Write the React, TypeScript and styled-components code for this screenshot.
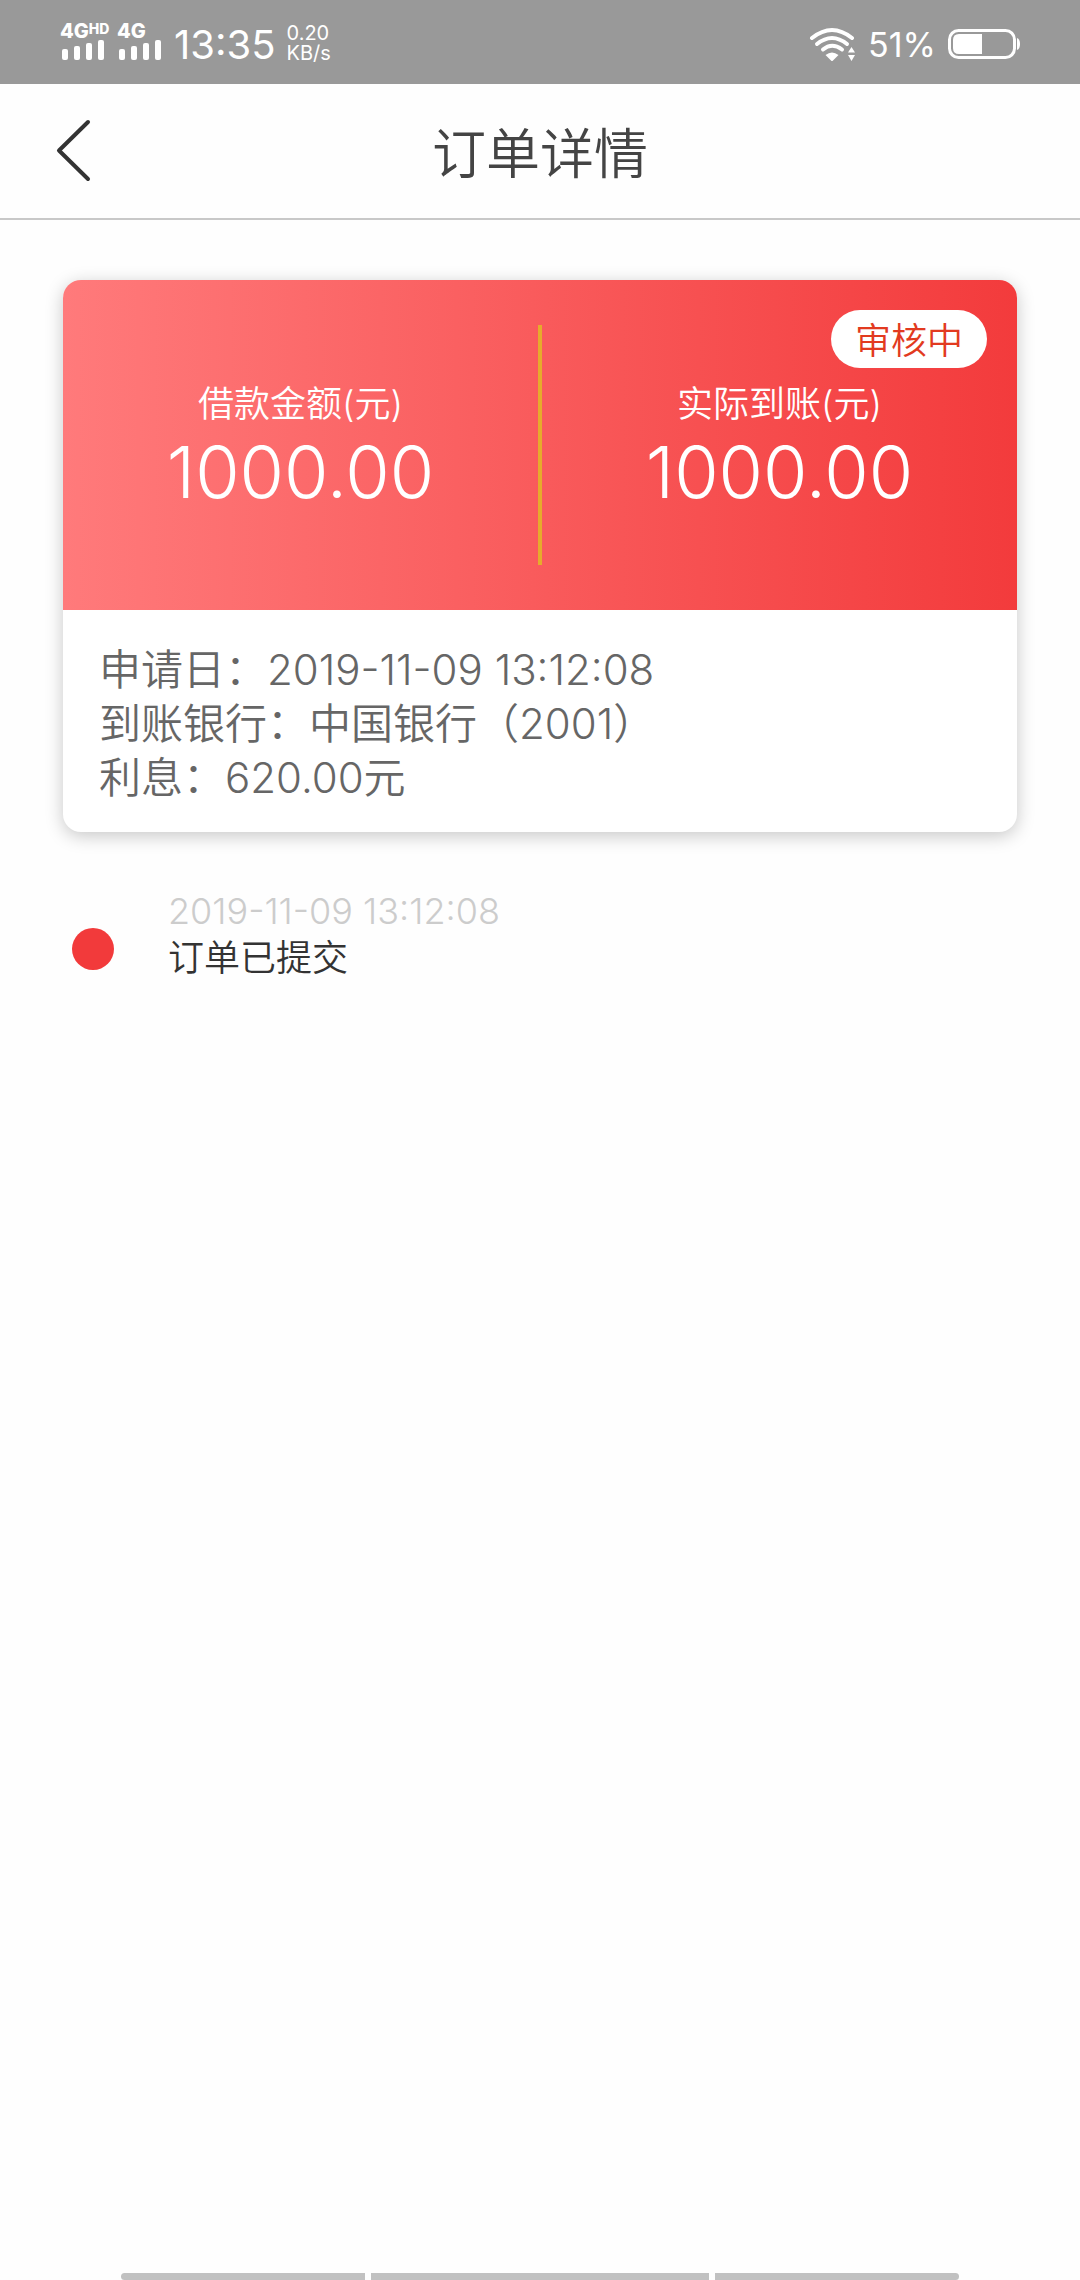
import React from "react";
import styled, { createGlobalStyle } from "styled-components";

const GlobalStyle = createGlobalStyle`
  *, *::before, *::after { box-sizing: border-box; }
  body {
    margin: 0;
    background: #fefefe;
    color: #333;
    font-family: Inter, "Noto Sans CJK SC", sans-serif;
    font-weight: 350;
  }
`;

const Screen = styled.div`
  display: flex;
  flex-direction: column;
  min-height: 100vh;
`;

const StatusBar = styled.div`
  display: flex;
  align-items: center;
  justify-content: space-between;
  height: 84px;
  padding: 6px 60px 0;
  background: #999;
  color: #fff;
`;

const StatusGroup = styled.div`
  display: flex;
  align-items: center;
  gap: 11px;
`;

const Signal = styled.div`
  display: flex;
  flex-direction: column;
  width: 46px;
  padding-bottom: 6px;
`;

const NetworkName = styled.span`
  display: flex;
  align-items: flex-start;
  height: 16px;
  font-size: 20px;
  font-weight: 800;
  line-height: 14px;
`;

const NetworkTag = styled.span`
  font-size: 14px;
  line-height: 10px;
`;

const Clock = styled.time`
  font-size: 40px;
  font-weight: 400;
  line-height: 48px;
`;

const Speed = styled.span`
  display: flex;
  flex-direction: column;
  font-size: 20px;
  font-weight: 400;
  line-height: 20px;
  padding-bottom: 4px;
`;

const BatteryLevel = styled.span`
  font-size: 34px;
  font-weight: 400;
  line-height: 48px;
`;

const Header = styled.header`
  display: grid;
  grid-template-columns: 150px 1fr 150px;
  align-items: center;
  height: 136px;
  border-bottom: 2px solid #c8c8c8;
`;

const BackButton = styled.button`
  display: flex;
  align-items: center;
  height: 134px;
  padding: 0 0 0 55px;
  border: 0;
  background: none;
  color: #333;
`;

const Title = styled.h1`
  margin: 0;
  padding-top: 8px;
  font-size: 54px;
  font-weight: 350;
  line-height: 72px;
  text-align: center;
  color: #444;
`;

const Content = styled.main`
  flex: 1;
  padding: 60px 63px;
`;

const Card = styled.section`
  overflow: hidden;
  border-radius: 18px;
  background: #fff;
  box-shadow: 0 4px 18px rgba(0, 0, 0, 0.22);
`;

const Amounts = styled.div`
  position: relative;
  display: grid;
  grid-template-columns: 1fr 4px 1fr;
  align-items: center;
  padding: 45px 0;
  background: linear-gradient(to right, #ff7a7b, #f33b3c);
  color: #fff;
`;

const Amount = styled.div`
  display: flex;
  flex-direction: column;
  align-items: center;
`;

const AmountLabel = styled.span`
  font-size: 36px;
  line-height: 54px;
`;

const AmountValue = styled.span`
  font-size: 72px;
  font-weight: 300;
  line-height: 82px;
`;

const Divider = styled.span`
  height: 240px;
  background: #e6ab2c;
`;

const Badge = styled.span`
  position: absolute;
  top: 30px;
  right: 30px;
  padding: 4px 24px 0;
  border-radius: 29px;
  background: #fff;
  color: #e23a20;
  font-size: 36px;
  line-height: 54px;
`;

const Details = styled.dl`
  margin: 0;
  padding: 33px 36px 27px;
  color: #666;
  font-size: 42px;
  line-height: 54px;
`;

const Detail = styled.div`
  display: flex;
`;

const Term = styled.dt`
  flex: none;
`;

const Value = styled.dd`
  margin: 0;
`;

const Timeline = styled.ol`
  margin: 0;
  padding: 57px 9px 0;
  list-style: none;
`;

const Event = styled.li`
  display: flex;
  align-items: flex-end;
  gap: 54px;
  font-size: 36px;
  line-height: 45px;
`;

const Dot = styled.span`
  width: 42px;
  height: 42px;
  margin-bottom: 11px;
  border-radius: 50%;
  background: #f23a3b;
`;

const EventText = styled.div`
  display: flex;
  flex-direction: column;
  gap: 2px;
`;

const EventTime = styled.time`
  color: #ccc;
`;

const GestureBar = styled.div`
  display: grid;
  grid-template-columns: 244fr 338fr 244fr;
  gap: 6px;
  height: 7px;
  padding: 0 121px;
`;

const GestureHandle = styled.span<{ $side?: "left" | "right" }>`
  background: #c1c1c1;
  border-radius: ${({ $side }) =>
    $side === "left" ? "4px 0 0 4px" : $side === "right" ? "0 4px 4px 0" : "0"};
`;

const SignalBars = () => (
  <svg width="46" height="20" viewBox="0 0 46 20" fill="currentColor" aria-hidden="true">
    <rect x="2" y="9" width="6" height="11" rx="2" />
    <rect x="14" y="6" width="6" height="14" rx="2" />
    <rect x="26" y="3" width="6" height="17" rx="2" />
    <rect x="38" y="0" width="6" height="20" rx="2" />
  </svg>
);

const WifiIcon = () => (
  <svg width="48" height="36" viewBox="0 0 48 36" fill="none" aria-hidden="true">
    <g stroke="#fff" strokeWidth="4" strokeLinecap="round">
      <path d="M3 11 Q23 -5 43 11" />
      <path d="M8 17 Q23 5 38 17" />
      <path d="M14 22.500 Q23 15 33 22.500" />
    </g>
    <path d="M16.500 28 Q23 23 29.500 28 L24 33.500 Q23 34.500 22 33.500 Z" fill="#fff" />
    <path d="M42.500 20 L46 25.500 H39 Z M39 28 H46 L42.500 34 Z" fill="#fff" />
  </svg>
);

const BatteryIcon = () => (
  <svg width="73" height="32" viewBox="0 0 73 32" fill="none" aria-hidden="true">
    <rect x="2.500" y="1.500" width="65" height="27" rx="9" stroke="#fff" strokeWidth="3" />
    <path d="M35 5 V25 H12 Q6 25 6 19 V11 Q6 5 12 5 Z" fill="#fff" />
    <path d="M70 9 Q73 10 73 15 Q73 20 70 21 Z" fill="#fff" />
  </svg>
);

const BackIcon = () => (
  <svg width="36" height="64" viewBox="0 0 36 64" fill="none" aria-hidden="true">
    <path
      d="M33 3 L4 31.500 L33 60"
      stroke="currentColor"
      strokeWidth="4"
      strokeLinecap="round"
      strokeLinejoin="round"
    />
  </svg>
);

const amounts = [
  { label: "借款金额(元)", value: "1000.00" },
  { label: "实际到账(元)", value: "1000.00" },
];

const details = [
  { term: "申请日：", value: "2019-11-09 13:12:08" },
  { term: "到账银行：", value: "中国银行（2001）" },
  { term: "利息：", value: "620.00元" },
];

const events = [{ time: "2019-11-09 13:12:08", text: "订单已提交" }];

const AmountCell = ({ label, value }: { label: string; value: string }) => (
  <Amount>
    <AmountLabel>{label}</AmountLabel>
    <AmountValue>{value}</AmountValue>
  </Amount>
);

export default function App() {
  return (
    <Screen>
      <GlobalStyle />
      <StatusBar>
        <StatusGroup>
          <Signal>
            <NetworkName>
              4G<NetworkTag>HD</NetworkTag>
            </NetworkName>
            <SignalBars />
          </Signal>
          <Signal>
            <NetworkName>4G</NetworkName>
            <SignalBars />
          </Signal>
          <Clock>13:35</Clock>
          <Speed>
            <span>0.20</span>
            <span>KB/s</span>
          </Speed>
        </StatusGroup>
        <StatusGroup>
          <WifiIcon />
          <BatteryLevel>51%</BatteryLevel>
          <BatteryIcon />
        </StatusGroup>
      </StatusBar>
      <Header>
        <BackButton type="button" aria-label="返回">
          <BackIcon />
        </BackButton>
        <Title>订单详情</Title>
      </Header>
      <Content>
        <Card>
          <Amounts>
            <AmountCell {...amounts[0]} />
            <Divider />
            <AmountCell {...amounts[1]} />
            <Badge>审核中</Badge>
          </Amounts>
          <Details>
            {details.map(({ term, value }) => (
              <Detail key={term}>
                <Term>{term}</Term>
                <Value>{value}</Value>
              </Detail>
            ))}
          </Details>
        </Card>
        <Timeline>
          {events.map(({ time, text }) => (
            <Event key={time}>
              <Dot />
              <EventText>
                <EventTime>{time}</EventTime>
                <span>{text}</span>
              </EventText>
            </Event>
          ))}
        </Timeline>
      </Content>
      <GestureBar>
        <GestureHandle $side="left" />
        <GestureHandle />
        <GestureHandle $side="right" />
      </GestureBar>
    </Screen>
  );
}
